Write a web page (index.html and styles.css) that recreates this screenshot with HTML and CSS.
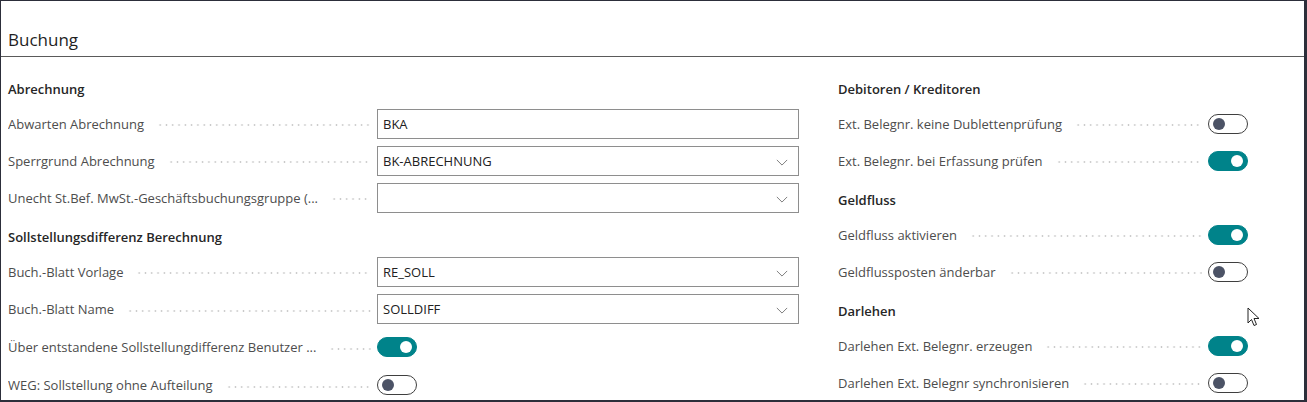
FILE: index.html
```html
<!DOCTYPE html>
<html lang="de">
<head>
  <meta charset="UTF-8" />
  <meta name="viewport" content="width=device-width, initial-scale=1" />
  <title>Buchung</title>
  <link rel="stylesheet" href="styles.css">
</head>
<body>
  <div class="frame">
    <div class="caption">
      <h2>Buchung</h2>
    </div>

    <div class="columns">
      <!-- linke Spalte -->
      <div class="col col-left">
        <div class="group-title">Abrechnung</div>
        <div class="field">
          <div class="label"><span>Abwarten Abrechnung</span><i class="dots"></i></div>
          <div class="input">BKA</div>
        </div>
        <div class="field">
          <div class="label"><span>Sperrgrund Abrechnung</span><i class="dots"></i></div>
          <div class="input select">BK-ABRECHNUNG
            <svg class="chevron" viewBox="0 0 14 8"><polyline points="1,1 7,7 13,1" /></svg>
          </div>
        </div>
        <div class="field">
          <div class="label"><span>Unecht St.Bef. MwSt.-Geschäftsbuchungsgruppe (...</span><i class="dots"></i></div>
          <div class="input select">
            <svg class="chevron" viewBox="0 0 14 8"><polyline points="1,1 7,7 13,1" /></svg>
          </div>
        </div>

        <div class="group-title">Sollstellungsdifferenz Berechnung</div>
        <div class="field">
          <div class="label"><span>Buch.-Blatt Vorlage</span><i class="dots"></i></div>
          <div class="input select">RE_SOLL
            <svg class="chevron" viewBox="0 0 14 8"><polyline points="1,1 7,7 13,1" /></svg>
          </div>
        </div>
        <div class="field tall">
          <div class="label"><span>Buch.-Blatt Name</span><i class="dots"></i></div>
          <div class="input select">SOLLDIFF
            <svg class="chevron" viewBox="0 0 14 8"><polyline points="1,1 7,7 13,1" /></svg>
          </div>
        </div>
        <div class="field tall">
          <div class="label"><span>Über entstandene Sollstellungdifferenz Benutzer ...</span><i class="dots"></i></div>
          <div class="toggle on"></div>
        </div>
        <div class="field tall">
          <div class="label"><span>WEG: Sollstellung ohne Aufteilung</span><i class="dots"></i></div>
          <div class="toggle"></div>
        </div>
      </div>

      <!-- rechte Spalte -->
      <div class="col col-right">
        <div class="group-title">Debitoren / Kreditoren</div>
        <div class="field">
          <div class="label"><span>Ext. Belegnr. keine Dublettenprüfung</span><i class="dots"></i></div>
          <div class="toggle"></div>
        </div>
        <div class="field">
          <div class="label"><span>Ext. Belegnr. bei Erfassung prüfen</span><i class="dots"></i></div>
          <div class="toggle on"></div>
        </div>

        <div class="group-title">Geldfluss</div>
        <div class="field">
          <div class="label"><span>Geldfluss aktivieren</span><i class="dots"></i></div>
          <div class="toggle on"></div>
        </div>
        <div class="field">
          <div class="label"><span>Geldflussposten änderbar</span><i class="dots"></i></div>
          <div class="toggle"></div>
        </div>

        <div class="group-title">Darlehen</div>
        <div class="field">
          <div class="label"><span>Darlehen Ext. Belegnr. erzeugen</span><i class="dots"></i></div>
          <div class="toggle on"></div>
        </div>
        <div class="field">
          <div class="label"><span>Darlehen Ext. Belegnr synchronisieren</span><i class="dots"></i></div>
          <div class="toggle"></div>
        </div>
      </div>
    </div>

    <!-- Mauszeiger -->
    <svg class="cursor" viewBox="0 0 13 20">
      <path d="M1 1 L1 16 L4.5 12.5 L7 18.5 L9.5 17.5 L7 11.5 L12 11.5 Z" />
    </svg>
  </div>
</body>
</html>
```

FILE: styles.css
```css
* {
  box-sizing: border-box;
}
body {
  margin: 0;
  background: #fff;
  font-family: "Open Sans", "Noto Sans", Arial, sans-serif;
  color: #4d4d4d;
}
.frame {
  position: relative;
  width: 1307px;
  height: 402px;
  border: 1px solid #2c2e3a;
  border-right-width: 3px;
  border-bottom-width: 2px;
  overflow: hidden;
}
.caption {
  height: 56px;
  border-bottom: 1px solid #5a5a5a;
  padding: 0 0 0 7px;
  display: flex;
  align-items: flex-end;
}
.caption h2 {
  margin: 0 0 5px;
  font-size: 17px;
  font-weight: 500;
  color: #1f1f1f;
}
.columns {
  display: grid;
  grid-template-columns: 791px 410px;
  column-gap: 39px;
  padding: 11px 0 0 7px;
}
.group-title {
  height: 37px;
  padding-top: 4px;
  display: flex;
  align-items: center;
  font-size: 13px;
  font-weight: 600;
  color: #262626;
}
.field {
  height: 37px;
  display: grid;
  grid-template-columns: 369px 1fr;
  align-items: center;
}
.field.tall {
  height: 38px;
}
.col-right .field {
  grid-template-columns: 370px 40px;
}
.label {
  display: flex;
  align-items: center;
  font-size: 13px;
  color: #4d4d4d;
  white-space: nowrap;
  overflow: hidden;
}
.dots {
  flex: 1;
  height: 2px;
  margin: 3px 6px 0 13px;
  background-image: radial-gradient(circle, #c9c9c9 0.8px, transparent 1.1px);
  background-size: 6.3px 2px;
  background-repeat: repeat-x;
}
.input {
  position: relative;
  height: 30px;
  border: 1px solid #8e8e8e;
  padding: 0 30px 0 5px;
  display: flex;
  align-items: center;
  font-size: 13px;
  color: #212121;
}
.chevron {
  position: absolute;
  right: 10px;
  top: 12px;
  width: 12px;
  height: 7px;
  fill: none;
  stroke: #777;
  stroke-width: 1.1;
}
.toggle {
  position: relative;
  width: 40px;
  height: 20px;
  border-radius: 10px;
  border: 1px solid #3f3f3f;
  background: #fff;
}
.toggle::after {
  content: "";
  position: absolute;
  top: 3px;
  left: 4px;
  width: 12px;
  height: 12px;
  border-radius: 50%;
  background: #4c5366;
}
.toggle.on {
  background: #00838a;
  border-color: #00838a;
}
.toggle.on::after {
  left: auto;
  right: 4px;
  background: #fff;
}
.cursor {
  position: absolute;
  left: 1246px;
  top: 306px;
  width: 13px;
  height: 20px;
  fill: #fff;
  stroke: #222;
  stroke-width: 1;
}
```
